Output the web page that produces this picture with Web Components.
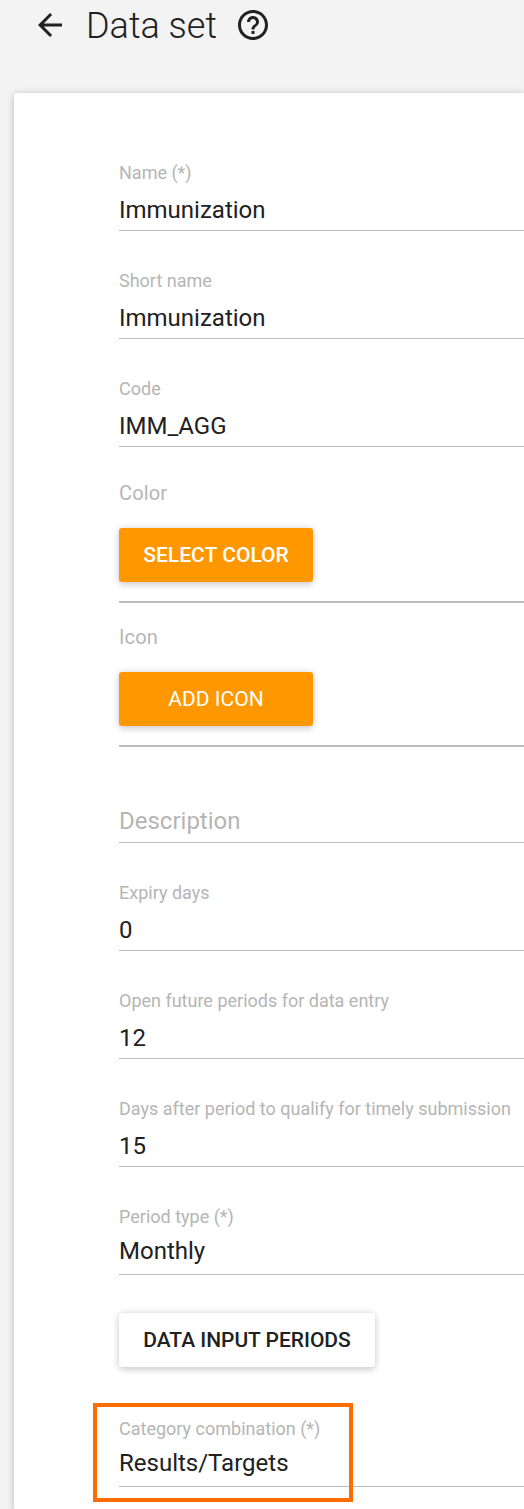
<!DOCTYPE html>
<html lang="en"><head><meta charset="utf-8"><title>Data set</title>
<style>
html,body{margin:0;height:1509px;overflow:hidden;background:#f3f3f3;font-family:Roboto,"Open Sans",sans-serif;color:#212121}
</style></head><body>
<data-set-page>
  <page-header slot="header">Data set</page-header>
  <text-field label="Name (*)">Immunization</text-field>
  <text-field label="Short name">Immunization</text-field>
  <text-field label="Code">IMM_AGG</text-field>
  <picker-field label="Color" style="margin-top:12px"><raised-button style="--w:500;--ls:.04px">SELECT COLOR</raised-button></picker-field>
  <picker-field label="Icon"><raised-button>ADD ICON</raised-button></picker-field>
  <text-field class="empty">Description</text-field>
  <text-field label="Expiry days">0</text-field>
  <text-field label="Open future periods for data entry">12</text-field>
  <text-field label="Days after period to qualify for timely submission">15</text-field>
  <text-field class="select" label="Period type (*)">Monthly</text-field>
  <raised-button class="plain">DATA INPUT PERIODS</raised-button>
  <text-field class="select marked" label="Category combination (*)">Results/Targets</text-field>
</data-set-page>
<script>
const define=(name,html,setup)=>customElements.define(name,class extends HTMLElement{
  constructor(){super();this.attachShadow({mode:'open'}).innerHTML=html;}
  connectedCallback(){if(setup)setup(this,this.shadowRoot);}
});
const setLabel=(host,root)=>{
  const label=root.querySelector('.label');
  if(host.hasAttribute('label'))label.textContent=host.getAttribute('label');else label.remove();
};
define('data-set-page',`<style>
:host{display:flex;flex-direction:column;height:1509px;overflow:hidden}
main{flex:1;margin-left:14px;padding:30px 0 0 105px;background:#fff;border-radius:3px 0 0 0;box-shadow:0 1.5px 9px rgba(0,0,0,.12),0 1.5px 6px rgba(0,0,0,.12);display:flex;flex-direction:column;align-items:stretch}
</style><slot name="header"></slot><main><slot></slot></main>`);
define('page-header',`<style>
:host{display:flex;align-items:center;box-sizing:border-box;height:93px;padding:0 0 43px 32px;flex:none}
svg{width:36px;height:36px;fill:#212121;flex:none}
h1{margin:0 18px;padding-top:2px;font-size:36px;font-weight:300;line-height:48px;white-space:nowrap}
</style>
<svg viewBox="0 0 24 24"><path d="M20 11H7.83l5.59-5.59L12 4l-8 8 8 8 1.41-1.41L7.83 13H20v-2z"/></svg>
<h1><slot></slot></h1>
<svg viewBox="0 0 24 24"><path d="M11 18h2v-2h-2v2zm1-16C6.48 2 2 6.48 2 12s4.48 10 10 10 10-4.48 10-10S17.52 2 12 2zm0 18c-4.41 0-8-3.59-8-8s3.59-8 8-8 8 3.59 8 8-3.59 8-8 8zm0-14c-2.21 0-4 1.79-4 4h2c0-1.1.9-2 2-2s2 .9 2 2c0 2-3 1.75-3 5h2c0-2.25 3-2.5 3-5 0-2.21-1.79-4-4-4z"/></svg>`);
define('text-field',`<style>
:host{display:flex;flex-direction:column;justify-content:flex-end;box-sizing:border-box;height:108px;flex:none;border-bottom:1px solid #bdbdbd;position:relative;white-space:nowrap}
.label{font-size:18px;line-height:24px;color:#b5b5b5;margin-bottom:10px}
.value{font-size:24px;line-height:30px;margin-bottom:5px}
:host(.select) .label{margin-bottom:7px}
:host(.select) .value{margin-bottom:8px}
:host(.empty){height:96px}
:host(.empty) .value{color:#b5b5b5;margin-bottom:6px}
:host(.marked){margin-top:12px}
:host(.marked)::after{content:"";position:absolute;left:-26px;top:24px;width:252px;height:91px;border:4px solid #ff6d00}
</style><div class="label"></div><div class="value"><slot></slot></div>`,setLabel);
define('picker-field',`<style>
:host{display:flex;flex-direction:column;align-items:flex-start;box-sizing:border-box;height:144px;flex:none;padding-top:22px;border-bottom:2px solid #bdbdbd}
.label{font-size:20px;letter-spacing:.15px;line-height:24px;color:#b5b5b5;margin-bottom:23px}
</style><div class="label"></div><slot></slot>`,setLabel);
define('raised-button',`<style>
:host{display:block;flex:none;width:194px;height:54px;border-radius:3px;background:#ff9800;box-shadow:0 1.5px 9px rgba(0,0,0,.12),0 1.5px 6px rgba(0,0,0,.12)}
button{all:unset;display:block;width:100%;height:100%;text-align:center;font:var(--w,400) 21px/54px Roboto,sans-serif;letter-spacing:var(--ls,0);color:#fff;white-space:nowrap}
:host(.plain){width:256px;margin-top:38px;background:#fff}
:host(.plain) button{color:#212121;font-weight:500;letter-spacing:-.03px}
</style><button><slot></slot></button>`);
</script></body></html>
